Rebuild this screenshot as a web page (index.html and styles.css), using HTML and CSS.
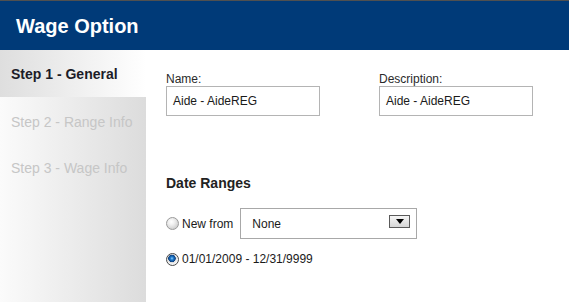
FILE: index.html
```html
<!DOCTYPE html>
<html>
<head>
<meta charset="utf-8">
<link rel="stylesheet" href="styles.css">
</head>
<body>
<div class="header"><h1 class="title">Wage Option</h1></div>
<div class="main">
  <div class="sidebar">
    <div class="step step-active">Step 1 - General</div>
    <div class="step">Step 2 - Range Info</div>
    <div class="step">Step 3 - Wage Info</div>
  </div>
  <div class="content">
    <div class="fields">
      <div class="field">
        <label class="label">Name:</label>
        <div class="input">Aide - AideREG</div>
      </div>
      <div class="field">
        <label class="label">Description:</label>
        <div class="input">Aide - AideREG</div>
      </div>
    </div>
    <h2 class="section">Date Ranges</h2>
    <div class="row row-new">
      <span class="radio"></span>
      <span class="radio-text">New from</span>
      <div class="select">
        <span class="select-value">None</span>
        <span class="select-btn"><span class="tri"></span></span>
      </div>
    </div>
    <div class="row row-range">
      <span class="radio radio-checked"></span>
      <span class="radio-text">01/01/2009 - 12/31/9999</span>
    </div>
  </div>
</div>
</body>
</html>
```
FILE: styles.css
```css
html, body {
  margin: 0;
  padding: 0;
  height: 100%;
  background: #fff;
  font-family: "Liberation Sans", Arial, sans-serif;
}
body {
  display: flex;
  flex-direction: column;
  overflow: hidden;
}
.header {
  box-sizing: border-box;
  height: 50px;
  border-top: 1px solid #505050;
  background: #003a78;
  padding: 13px 16px 0;
  flex: none;
}
.title {
  margin: 0;
  font-size: 20px;
  line-height: 24px;
  font-weight: bold;
  color: #fff;
}
.main {
  flex: 1;
  display: flex;
}
.sidebar {
  width: 146px;
  flex: none;
  background: linear-gradient(to right, #fbfbfb, #dcdcdc);
}
.step {
  box-sizing: border-box;
  height: 46px;
  padding: 17px 0 0 11px;
  font-size: 14px;
  line-height: 16px;
  color: #c6c6c6;
}
.step-active {
  height: 47px;
  padding-top: 16px;
  font-weight: bold;
  color: #1c1c28;
  background: linear-gradient(to right, #dedede, #ffffff);
}
.content {
  flex: 1;
  padding: 22px 0 0 20px;
}
.fields {
  display: flex;
  gap: 59px;
}
.field {
  display: flex;
  flex-direction: column;
}
.label {
  font-size: 12px;
  line-height: 14px;
  color: #2a2a2a;
}
.input {
  box-sizing: border-box;
  width: 154px;
  height: 30px;
  border: 1px solid #b4b4b4;
  padding: 0 6px;
  font-size: 12px;
  line-height: 28px;
  color: #1a1a1a;
}
.section {
  margin: 59px 0 0;
  font-size: 14px;
  line-height: 16px;
  font-weight: bold;
  color: #222;
}
.row {
  display: flex;
  align-items: center;
  font-size: 12px;
  color: #1a1a1a;
}
.row-new {
  margin-top: 17px;
}
.row-range {
  margin-top: 13px;
  line-height: 14px;
}
.radio {
  box-sizing: border-box;
  width: 13px;
  height: 13px;
  border-radius: 50%;
  border: 1px solid #9a9a9a;
  background: radial-gradient(circle at 40% 35%, #ffffff 0, #f0f0f0 3px, #d2d2d2 7px);
  margin-right: 3px;
  flex: none;
}
.radio-checked {
  border-color: #4a4a4a;
  background: radial-gradient(circle at 45% 40%, #8fd0ff 0, #1f7ccf 1.5px, #0b3f80 3.5px, #dcdcdc 4px, #f4f4f4 5.5px);
}
.row-new .radio-text {
  margin-right: 7px;
}
.select {
  box-sizing: border-box;
  width: 177px;
  height: 31px;
  border: 1px solid #a8a8a8;
  display: flex;
  align-items: center;
  justify-content: space-between;
  padding: 0 6px 0 11px;
}
.select-value {
  font-size: 12px;
  color: #1a1a1a;
}
.select-btn {
  box-sizing: border-box;
  width: 21px;
  height: 13px;
  border: 1px solid #5a5a5a;
  background: linear-gradient(#f6f6f6, #d6d6d6);
  display: flex;
  align-items: center;
  justify-content: center;
  margin-top: -4px;
}
.tri {
  width: 0;
  height: 0;
  border-left: 4px solid transparent;
  border-right: 4px solid transparent;
  border-top: 5px solid #000;
}
```
